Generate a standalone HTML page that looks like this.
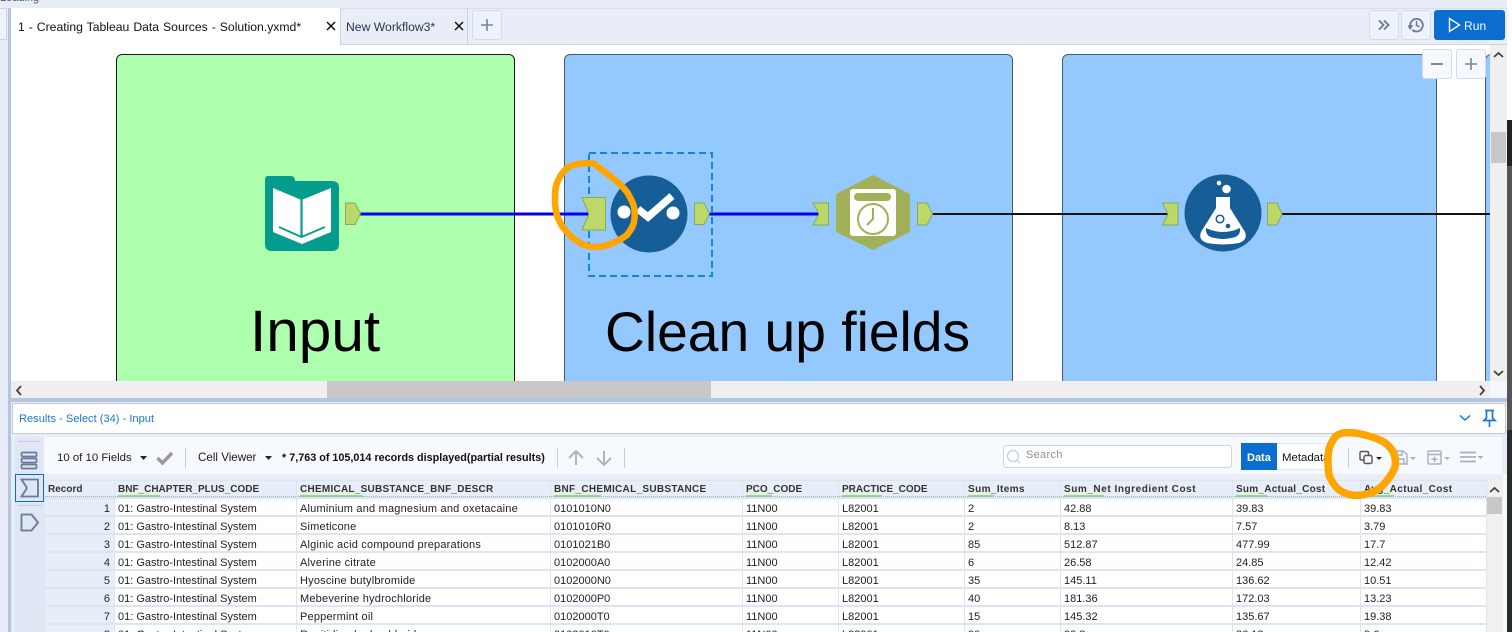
<!DOCTYPE html>
<html><head><meta charset="utf-8"><style>
html,body{margin:0;padding:0;background:#fff}
#p{position:relative;width:1512px;height:632px;overflow:hidden;background:#e9edf8;font-family:"Liberation Sans",sans-serif;color:#1c1c1c}
.b{position:absolute;box-sizing:border-box}
.t{position:absolute;white-space:nowrap;font-size:11px;line-height:14px}
.btn{position:absolute;box-sizing:border-box;background:#eef2fb;border:1px solid #d3dcee;border-radius:3px}
.row{position:absolute;left:45px;display:grid;grid-template-columns:69px 181px 253px 191px 95px 125px 95px 171px 127px 125px;column-gap:1px;height:16px}
.row>div{background:#fff;font-size:11px;line-height:16px;padding:2px 0 0 3px;white-space:nowrap;overflow:hidden;box-sizing:border-box;color:#222}
.row>div:nth-child(3){letter-spacing:.2px}
.row>div:first-child{background:#e8eef8;text-align:right;padding-right:4px}
.hd>div{background:#e8eef8;font-weight:bold;color:#333;font-size:10px;line-height:15px;padding-top:1px;position:relative;overflow:visible}
.hd>div:nth-child(3){letter-spacing:.25px}
.hd>div:first-child{text-align:left;padding-left:3px}
.hd i{position:absolute;left:3px;bottom:0;height:2px;background:#8fe36b}
.big{position:absolute;white-space:nowrap;font-size:55.5px;line-height:64px;color:#000}
</style></head><body><div id="p">

<div class="t" style="left:0;top:-9px;color:#555;font-size:11px">Loading</div>
<div class="b" style="left:0;top:8px;width:7px;height:32px;background:#eef2fb;border:1px solid #cfd8ea;border-left:0"></div>
<div class="b" style="left:8px;top:8px;width:1504px;height:1px;background:#d7deee"></div>
<div class="b" style="left:8px;top:8px;width:3px;height:624px;background:#b4c5e4"></div>

<!-- tabs -->
<div class="b" style="left:11px;top:8px;width:329px;height:37px;background:#fff"></div>
<div class="b" style="left:340px;top:8px;width:1px;height:37px;background:#c8d3e8"></div>
<div class="b" style="left:11px;top:44px;width:1496px;height:1px;background:#c8d3e8"></div>
<div class="b" style="left:11px;top:44px;width:329px;height:1px;background:#fff"></div>
<div class="t" style="left:18px;top:20px;font-size:12.2px;word-spacing:.6px;color:#111">1 - Creating Tableau Data Sources - Solution.yxmd*</div>
<svg class="b" style="left:326px;top:21px" width="10" height="10"><path d="M1 1L9 9M9 1L1 9" stroke="#111" stroke-width="1.5"/></svg>
<div class="t" style="left:346px;top:20px;font-size:12.2px;color:#2b3550">New Workflow3*</div>
<svg class="b" style="left:454px;top:21px" width="10" height="10"><path d="M1 1L9 9M9 1L1 9" stroke="#111" stroke-width="1.5"/></svg>
<div class="b" style="left:467px;top:8px;width:1px;height:37px;background:#c8d3e8"></div>
<div class="btn" style="left:472px;top:10px;width:30px;height:30px"></div>
<svg class="b" style="left:479px;top:17px" width="16" height="16"><path d="M8 2V14M2 8H14" stroke="#7585a3" stroke-width="1.6"/></svg>

<div class="btn" style="left:1369px;top:10px;width:30px;height:30px"></div>
<svg class="b" style="left:1377px;top:18px" width="14" height="14"><path d="M2 2.500L6.500 7L2 11.500M7 2.500L11.500 7L7 11.500" fill="none" stroke="#6b7a99" stroke-width="1.900"/></svg>
<div class="btn" style="left:1401px;top:10px;width:30px;height:30px"></div>
<svg class="b" style="left:1407px;top:16px" width="18" height="18"><path d="M3.200 9.500A6.300 6.300 0 1 1 5.200 13.800" fill="none" stroke="#6b7a99" stroke-width="1.800"/><path d="M0.600 9.500L6.400 9L3 14.200Z" fill="#6b7a99"/><path d="M9.500 5V9.400L12.600 11" fill="none" stroke="#6b7a99" stroke-width="1.500"/></svg>
<div class="b" style="left:1434px;top:10px;width:71px;height:30px;background:#0b6dd0;border-radius:3px"></div>
<svg class="b" style="left:1448px;top:17px" width="13" height="16"><path d="M1.500 1.500L11.500 8L1.500 14.500Z" fill="none" stroke="#fff" stroke-width="1.400"/></svg>
<div class="t" style="left:1464px;top:19px;color:#fff;font-size:12px;letter-spacing:.1px">Run</div>

<!-- canvas -->
<div class="b" style="left:11px;top:45px;width:1479px;height:336px;background:#fff;overflow:hidden">
  <div class="b" style="left:105px;top:9px;width:399px;height:360px;background:#adffad;border:1px solid #1a1a1a;border-radius:6px"></div>
  <div class="b" style="left:553px;top:9px;width:449px;height:360px;background:#94c9ff;border:1px solid #4a5a6e;border-radius:6px"></div>
  <div class="b" style="left:1051px;top:9px;width:375px;height:360px;background:#94c9ff;border:1px solid #4a5a6e;border-radius:6px"></div>
  <div class="b" style="left:1474px;top:9px;width:40px;height:360px;background:#94c9ff;border:1px solid #4a5a6e;border-radius:6px"></div>
  <div class="big" style="left:239px;top:255px;font-size:58.500px">Input</div>
  <div class="big" style="left:594px;top:255px;font-size:55.200px">Clean up fields</div>
</div>

<!-- workflow svg -->
<svg class="b" style="left:0;top:45px;overflow:visible" width="1490" height="336">
<g transform="translate(0,-45)">
  <path d="M360 214H592" stroke="#0000e6" stroke-width="3"/>
  <path d="M709 214H822" stroke="#0000e6" stroke-width="3"/>
  <path d="M932 214H1172M1281 214H1490" stroke="#111" stroke-width="2"/>
  <!-- Input tool -->
  <path d="M268 176H291Q295 176 295 181H332Q339 181 339 188V244Q339 251 332 251H272Q265 251 265 244V180Q265 176 268 176Z" fill="#049c8c"/>
  <path d="M273 188L301.500 200L331 188V232L302 244L273 232Z" fill="#fff"/>
  <path d="M301.500 198V236" stroke="#049c8c" stroke-width="2.200"/>
  <path d="M279 227L301.500 237L325 227" fill="none" stroke="#049c8c" stroke-width="1.800"/>
  <path d="M345.500 203H355L360.500 213.500L355 224.500H345.500Z" fill="#bcd868" stroke="#8aa85a"/>
  <!-- select -->
  <rect x="589" y="153" width="123" height="123" fill="none" stroke="#1683dc" stroke-width="2" stroke-dasharray="7 4"/>
  <circle cx="649" cy="214" r="38.500" fill="#165e98"/>
  <circle cx="624" cy="212" r="6.500" fill="#fff"/>
  <circle cx="673" cy="213" r="6.500" fill="#fff"/>
  <path d="M638 209L648 217L672 196" fill="none" stroke="#fff" stroke-width="7.500"/>
  <path d="M582 197.500H605.500V230H582L589 214Z" fill="#bcd868" stroke="#8aa85a"/>
  <path d="M694.500 203H704L709.500 213.500L704 224.500H694.500Z" fill="#bcd868" stroke="#8aa85a"/>
  <!-- formula -->
  <path d="M813 203H828.500V225H813L819 214Z" fill="#bcd868" stroke="#8aa85a"/>
  <path d="M873 175L910 194V232L873 250L836 232V194Z" fill="#a3b05a"/>
  <rect x="850" y="189" width="46" height="47" rx="3" fill="#fff"/>
  <rect x="854" y="193" width="37" height="8" rx="4" fill="#a3b05a"/>
  <circle cx="873" cy="219" r="15" fill="none" stroke="#a3b05a" stroke-width="2"/>
  <path d="M873 208V219L867 225" fill="none" stroke="#a3b05a" stroke-width="2"/>
  <path d="M917.500 203H927L932.500 214L927 225H917.500Z" fill="#bcd868" stroke="#8aa85a"/>
  <!-- flask -->
  <path d="M1162.500 203H1178V225H1162.500L1168 214Z" fill="#bcd868" stroke="#8aa85a"/>
  <circle cx="1223" cy="213" r="38.500" fill="#165e98"/>
  <circle cx="1219" cy="183" r="2.300" fill="#fff"/>
  <circle cx="1226.500" cy="189" r="4.300" fill="#fff"/>
  <path d="M1216 197H1230V208L1245 232Q1248 240 1239 243Q1223 246 1207 243Q1198 240 1201 232L1216 208Z" fill="#fff"/>
  <path d="M1206 228Q1223 236 1240 228Q1241 237 1231 238Q1223 240 1215 238Q1205 237 1206 228Z" fill="#165e98"/>
  <circle cx="1220" cy="219" r="3.800" fill="#fff" stroke="#165e98" stroke-width="1.500"/>
  <circle cx="1228" cy="226" r="2.300" fill="#165e98"/>
  <path d="M1267.500 203H1277L1282 214L1277 225H1267.500Z" fill="#bcd868" stroke="#8aa85a"/>
</g></svg>

<div class="btn" style="left:1422px;top:49px;width:30px;height:30px;background:#f6f9fe"></div>
<div class="btn" style="left:1456px;top:49px;width:30px;height:30px;background:#f6f9fe"></div>
<svg class="b" style="left:1429px;top:56px" width="16" height="16"><path d="M2 8H14" stroke="#6b7a99" stroke-width="1.800"/></svg>
<svg class="b" style="left:1463px;top:56px" width="16" height="16"><path d="M8 2V14M2 8H14" stroke="#7585a3" stroke-width="1.600"/></svg>

<!-- scrollbars -->
<div class="b" style="left:1490px;top:45px;width:17px;height:336px;background:#efefef"></div>
<div class="b" style="left:1491px;top:132px;width:15px;height:31px;background:#c8c8c8"></div>
<svg class="b" style="left:1493px;top:51px" width="11" height="8"><path d="M1 6L5.500 2L10 6" fill="none" stroke="#444" stroke-width="1.800"/></svg>
<svg class="b" style="left:1493px;top:369px" width="11" height="8"><path d="M1 2L5.500 6L10 2" fill="none" stroke="#444" stroke-width="1.800"/></svg>
<div class="b" style="left:11px;top:381px;width:1479px;height:17px;background:#efefef"></div>
<div class="b" style="left:327px;top:381px;width:384px;height:17px;background:#c8c8c8"></div>
<svg class="b" style="left:15px;top:385px" width="8" height="11"><path d="M6 1L2 5.500L6 10" fill="none" stroke="#444" stroke-width="1.800"/></svg>
<svg class="b" style="left:1478px;top:385px" width="8" height="11"><path d="M2 1L6 5.500L2 10" fill="none" stroke="#444" stroke-width="1.800"/></svg>
<div class="b" style="left:1490px;top:381px;width:17px;height:17px;background:#f3f7fe"></div>

<!-- right edge -->
<div class="b" style="left:1507px;top:0;width:5px;height:120px;background:#fff"></div>
<div class="b" style="left:1507px;top:120px;width:5px;height:46px;background:#222"></div>
<div class="b" style="left:1507px;top:166px;width:5px;height:264px;background:#555"></div>
<div class="b" style="left:1507px;top:430px;width:5px;height:202px;background:#2a2a2a"></div>

<!-- results -->
<div class="b" style="left:11px;top:398px;width:1496px;height:234px;background:#e9edf8"></div>
<div class="b" style="left:11px;top:398px;width:1496px;height:4px;background:#b4c5e4"></div>
<div class="b" style="left:12px;top:403px;width:1494px;height:31px;background:#fff;border:1px solid #c9c9c9"></div>
<div class="t" style="left:19px;top:412px;color:#1b78cf;font-size:11.100px">Results - Select (34) - Input</div>
<svg class="b" style="left:1459px;top:414px" width="12" height="8"><path d="M1 1.500L6 6L11 1.500" fill="none" stroke="#1b78cf" stroke-width="1.500"/></svg>
<svg class="b" style="left:1482px;top:409px" width="15" height="20"><path d="M3 1.500H12M4.500 1.500V9L2 11.500H13L10.500 9V1.500M7.500 11.500V18" fill="none" stroke="#1b78cf" stroke-width="1.700"/></svg>

<!-- toolbar -->
<div class="b" style="left:44px;top:437px;width:1458px;height:37px;background:#f6f9fe"></div>
<div class="b" style="left:15px;top:437px;width:29px;height:195px;background:#dfe6f4"></div>
<div class="b" style="left:19px;top:441px;width:20px;height:0;border-top:1.500px dotted #a8b2c6"></div>
<svg class="b" style="left:20px;top:451px" width="18" height="20"><g fill="none" stroke="#6b7a99" stroke-width="1.700"><rect x="1.500" y="1.500" width="15" height="4" rx="1"/><rect x="1.500" y="7.500" width="15" height="4" rx="1"/><rect x="1.500" y="13.500" width="15" height="4" rx="1"/></g></svg>
<div class="b" style="left:15px;top:474px;width:29px;height:28px;border:1px solid #0b6dd0"></div>
<svg class="b" style="left:20px;top:478px" width="20" height="20"><path d="M1.500 1.500H18V18.500H1.500L7 10Z" fill="none" stroke="#6b7a99" stroke-width="1.800"/></svg>
<div class="b" style="left:18px;top:505px;width:24px;height:1px;background:#c4cde0"></div>
<svg class="b" style="left:20px;top:513px" width="20" height="20"><path d="M1.500 1.500H11.500L18 9.500L11.500 17.500H1.500Z" fill="none" stroke="#6b7a99" stroke-width="1.800" stroke-linejoin="round"/></svg>

<div class="t" style="left:57px;top:451px;font-size:11.400px">10 of 10 Fields</div>
<svg class="b" style="left:140px;top:456px" width="7" height="4"><path d="M0 0H7L3.500 4Z" fill="#222"/></svg>
<svg class="b" style="left:156px;top:450px" width="18" height="16"><path d="M1.500 8L6.500 13L16 3" fill="none" stroke="#9a9a9a" stroke-width="3.500"/></svg>
<div class="b" style="left:185px;top:448px;width:1px;height:20px;background:#c8ccd4"></div>
<div class="t" style="left:198px;top:451px;font-size:11.600px">Cell Viewer</div>
<svg class="b" style="left:265px;top:456px" width="7" height="4"><path d="M0 0H7L3.500 4Z" fill="#222"/></svg>
<div class="t" style="left:282px;top:451px;font-weight:bold;font-size:10.800px;color:#111">* 7,763 of 105,014 records displayed(partial results)</div>
<div class="b" style="left:557px;top:448px;width:1px;height:20px;background:#c8ccd4"></div>
<svg class="b" style="left:567px;top:449px" width="18" height="18"><path d="M9 16V2M2 9L9 2L16 9" fill="none" stroke="#b0b4bb" stroke-width="2"/></svg>
<svg class="b" style="left:595px;top:449px" width="18" height="18"><path d="M9 2V16M2 9L9 16L16 9" fill="none" stroke="#b0b4bb" stroke-width="2"/></svg>
<div class="b" style="left:624px;top:448px;width:1px;height:20px;background:#c8ccd4"></div>

<div class="b" style="left:1003px;top:445px;width:229px;height:23px;background:#fff;border:1px solid #ccd5e6;border-radius:3px"></div>
<svg class="b" style="left:1006px;top:449px" width="16" height="16"><circle cx="7" cy="7" r="5.500" fill="none" stroke="#c9d3e4" stroke-width="1.500"/><path d="M11 11L14 14" stroke="#c9d3e4" stroke-width="1.500"/></svg>
<div class="t" style="left:1026px;top:448px;color:#8a8f98;font-size:11px;letter-spacing:.3px">Search</div>
<div class="b" style="left:1241px;top:443px;width:36px;height:27px;background:#0b6dd0"></div>
<div class="t" style="left:1247px;top:451px;color:#fff;font-weight:bold;font-size:11px">Data</div>
<div class="b" style="left:1277px;top:443px;width:50px;height:27px;background:#fff;overflow:hidden;border:1px solid #e2e8f3;border-left:0"><div class="t" style="left:5px;top:7px;color:#111;font-size:11.400px">Metadata</div></div>
<div class="b" style="left:1348px;top:448px;width:1px;height:20px;background:#c8ccd4"></div>
<svg class="b" style="left:1358px;top:449px" width="26" height="18"><g fill="none" stroke="#555" stroke-width="1.400"><path d="M6 11H3.500Q2 11 2 9.500V4Q2 2.500 3.500 2.500H9Q10.500 2.500 10.500 4V6"/><rect x="6" y="6.500" width="8" height="8" rx="1.500"/></g><path d="M18 8H24L21 11Z" fill="#222"/></svg>
<svg class="b" style="left:1392px;top:449px" width="26" height="18"><g fill="none" stroke="#aab0ba" stroke-width="1.400"><path d="M2 2H11L15 5.500V15H2Z"/><path d="M5 2V6H10V2M5 15V10H12V15"/></g><path d="M18 8H24L21 11Z" fill="#aab0ba"/></svg>
<svg class="b" style="left:1426px;top:449px" width="26" height="18"><g fill="none" stroke="#aab0ba" stroke-width="1.400"><rect x="2" y="2" width="13" height="13" rx="1"/><path d="M2 5.500H15M8.500 7.500V13M5.500 10.200H11.500"/></g><path d="M18 8H24L21 11Z" fill="#aab0ba"/></svg>
<svg class="b" style="left:1459px;top:449px" width="26" height="18"><path d="M1 3.500H17M1 8H17M1 12.500H17" stroke="#aab0ba" stroke-width="1.700"/><path d="M18.500 7H24.500L21.500 10Z" fill="#aab0ba"/></svg>

<!-- table -->
<div class="b" style="left:44px;top:480px;width:1443px;height:152px;background:#dce5f4"></div>
<div class="row hd" style="top:481px;height:15px">
<div>Record</div>
<div>BNF_CHAPTER_PLUS_CODE<i style="width:42px"></i></div>
<div>CHEMICAL_SUBSTANCE_BNF_DESCR<i style="width:63px"></i></div>
<div style="letter-spacing:.3px">BNF_CHEMICAL_SUBSTANCE<i style="width:47px"></i></div>
<div>PCO_CODE<i style="width:26px"></i></div>
<div>PRACTICE_CODE<i style="width:40px"></i></div>
<div style="letter-spacing:.4px">Sum_Items<i style="width:26px"></i></div>
<div style="letter-spacing:.55px">Sum_Net Ingredient Cost<i style="width:40px"></i></div>
<div style="letter-spacing:.25px">Sum_Actual_Cost<i style="width:31px"></i></div>
<div style="letter-spacing:.4px">Avg_Actual_Cost<i style="width:30px"></i></div>
</div>
<div class="b" style="left:45px;top:496px;width:1441px;height:0;border-top:1.500px dotted #aab0ba"></div>

<div class="row" style="top:499px"><div>1</div><div>01: Gastro-Intestinal System</div><div>Aluminium and magnesium and oxetacaine</div><div>0101010N0</div><div>11N00</div><div>L82001</div><div>2</div><div>42.88</div><div>39.83</div><div>39.83</div></div>
<div class="row" style="top:517px"><div>2</div><div>01: Gastro-Intestinal System</div><div>Simeticone</div><div>0101010R0</div><div>11N00</div><div>L82001</div><div>2</div><div>8.13</div><div>7.57</div><div>3.79</div></div>
<div class="row" style="top:535px"><div>3</div><div>01: Gastro-Intestinal System</div><div>Alginic acid compound preparations</div><div>0101021B0</div><div>11N00</div><div>L82001</div><div>85</div><div>512.87</div><div>477.99</div><div>17.7</div></div>
<div class="row" style="top:553px"><div>4</div><div>01: Gastro-Intestinal System</div><div>Alverine citrate</div><div>0102000A0</div><div>11N00</div><div>L82001</div><div>6</div><div>26.58</div><div>24.85</div><div>12.42</div></div>
<div class="row" style="top:571px"><div>5</div><div>01: Gastro-Intestinal System</div><div>Hyoscine butylbromide</div><div>0102000N0</div><div>11N00</div><div>L82001</div><div>35</div><div>145.11</div><div>136.62</div><div>10.51</div></div>
<div class="row" style="top:589px"><div>6</div><div>01: Gastro-Intestinal System</div><div>Mebeverine hydrochloride</div><div>0102000P0</div><div>11N00</div><div>L82001</div><div>40</div><div>181.36</div><div>172.03</div><div>13.23</div></div>
<div class="row" style="top:607px"><div>7</div><div>01: Gastro-Intestinal System</div><div>Peppermint oil</div><div>0102000T0</div><div>11N00</div><div>L82001</div><div>15</div><div>145.32</div><div>135.67</div><div>19.38</div></div>
<div class="row" style="top:625px"><div>8</div><div>01: Gastro-Intestinal System</div><div>Ranitidine hydrochloride</div><div>0103010T0</div><div>11N00</div><div>L82001</div><div>90</div><div>93.3</div><div>86.13</div><div>9.6</div></div>

<div class="b" style="left:1487px;top:480px;width:16px;height:152px;background:#f0f0f0"></div>
<div class="b" style="left:1503px;top:474px;width:4px;height:158px;background:#f6f9fe"></div>
<div class="b" style="left:1487px;top:497px;width:15px;height:17px;background:#c8c8c8"></div>
<svg class="b" style="left:1489px;top:486px" width="11" height="8"><path d="M1 6L5.500 2L10 6" fill="none" stroke="#444" stroke-width="1.800"/></svg>

<!-- orange annotations -->
<svg class="b" style="left:0;top:0;pointer-events:none" width="1512" height="632">
<g fill="none" stroke="#ffa500" stroke-linecap="round" stroke-linejoin="round">
<path stroke-width="6.500" d="M595 164C588 163 583 163 578 164C572 165 568 167 565 170C561 174 559 178 557 183C555 188 555 194 555 200C555 207 556 213 558 218C560 223 563 228 567 232C571 237 575 240 580 243C585 246 591 247 597 247C603 247 608 245 613 243C618 241 623 238 627 235C630 231 633 227 634 222C635 217 635 212 634 207C633 202 630 197 627 192C623 187 619 183 615 180C609 175 604 171 598 167"/>
<path stroke-width="7.500" d="M1365 435C1358 433 1350 432 1343 433C1338 434 1335 436 1333 440C1330 445 1328 451 1328 457C1328 463 1328 469 1329 475C1331 480 1333 484 1337 488C1341 492 1346 494 1352 495C1358 496 1364 495 1370 493C1376 491 1381 488 1385 483C1389 478 1393 473 1395 467C1396 461 1395 455 1392 450C1389 446 1385 442 1380 440C1375 438 1370 436 1365 435"/>
</g></svg>

</div></body></html>
